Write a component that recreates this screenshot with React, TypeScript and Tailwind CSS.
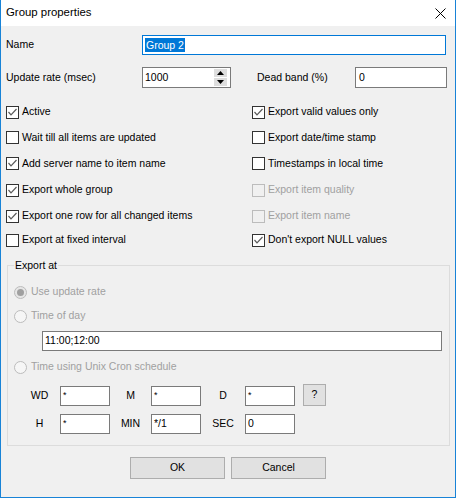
import React from "react";

const font = "font-['Liberation_Sans',Arial,sans-serif]";

function CheckBox({ checked, disabled }: { checked?: boolean; disabled?: boolean }) {
  return (
    <span
      className={`flex h-[13px] w-[13px] shrink-0 items-center justify-center border ${
        disabled ? "border-[#bcbcbc] bg-[#f0f0f0]" : "border-[#333333] bg-white"
      }`}
    >
      {checked && (
        <svg width="11" height="11" viewBox="0 0 11 11">
          <polyline points="1.5,5 4,7.8 9.5,2" fill="none" stroke="#5a5a5a" strokeWidth="1.2" />
        </svg>
      )}
    </span>
  );
}

function Radio({ selected }: { selected?: boolean }) {
  return (
    <span
      className={`flex h-[13px] w-[13px] shrink-0 items-center justify-center rounded-full border border-[#bcbcbc] ${
        selected ? "bg-[#e6e6e6]" : "bg-[#f6f6f6]"
      }`}
    >
      {selected && <span className="h-[7px] w-[7px] rounded-full bg-[#a0a0a0]" />}
    </span>
  );
}

function CheckRow({ label, checked, disabled }: { label: string; checked?: boolean; disabled?: boolean }) {
  return (
    <div className="flex items-center gap-[3px]">
      <CheckBox checked={checked} disabled={disabled} />
      <span className={disabled ? "text-[#a0a0a0]" : "text-black"}>{label}</span>
    </div>
  );
}

function TextBox({ value, className }: { value: string; className: string }) {
  return (
    <div className={`flex items-center border border-[#7a7a7a] bg-white pl-[2px] ${className}`}>
      <span>{value}</span>
    </div>
  );
}

function Spinner() {
  return (
    <div className="mr-[3px] flex flex-col gap-[1px]">
      <div className="flex h-[8px] w-[13px] items-center justify-center bg-[#dedede]">
        <svg width="7" height="4" viewBox="0 0 7 4">
          <polygon points="3.5,0 7,4 0,4" fill="#000" />
        </svg>
      </div>
      <div className="flex h-[8px] w-[13px] items-center justify-center bg-[#dedede]">
        <svg width="7" height="4" viewBox="0 0 7 4">
          <polygon points="0,0 7,0 3.5,4" fill="#000" />
        </svg>
      </div>
    </div>
  );
}

const checks: [string, boolean, boolean][] = [
  ["Active", true, false],
  ["Export valid values only", true, false],
  ["Wait till all items are updated", false, false],
  ["Export date/time stamp", false, false],
  ["Add server name to item name", true, false],
  ["Timestamps in local time", false, false],
  ["Export whole group", true, false],
  ["Export item quality", false, true],
  ["Export one row for all changed items", true, false],
  ["Export item name", false, true],
  ["Export at fixed interval", false, false],
  ["Don't export NULL values", true, false],
];

export default function App() {
  return (
    <div
      className={`${font} flex h-[498px] w-[456px] flex-col border-x border-b border-[#1883d7] bg-[#f0f0f0] text-[10.5px] text-black`}
    >
      <div className="flex h-[26px] shrink-0 items-center justify-between bg-white pl-[5px] pr-[9px]">
        <span className="text-[11.4px]">Group properties</span>
        <svg width="11" height="11" viewBox="0 0 11 11">
          <path d="M0.5 0.5 L10.5 10.5 M10.5 0.5 L0.5 10.5" stroke="#000" strokeWidth="1" />
        </svg>
      </div>

      <div className="pl-[5px] pt-[9px]">
        <div className="flex h-[20px] items-center">
          <span className="w-[136px]">Name</span>
          <div className="flex h-[20px] w-[304px] items-center border border-[#0078d7] bg-white pl-[2px]">
            <span className="bg-[#0078d7] px-[1px] leading-[14px] text-white">Group 2</span>
          </div>
        </div>

        <div className="mt-[12px] flex h-[21px] items-center">
          <span className="w-[136px]">Update rate (msec)</span>
          <div className="flex h-[21px] w-[89px] items-center justify-between border border-[#7a7a7a] bg-white pl-[2px]">
            <span>1000</span>
            <Spinner />
          </div>
          <span className="ml-[26px] w-[98px]">Dead band (%)</span>
          <TextBox value="0" className="h-[21px] w-[92px] pl-[3px]" />
        </div>

        <div className="mt-[11px] grid grid-cols-[246px_1fr] grid-rows-[26px_25px_27px_26px_26px_22px]">
          {checks.map(([label, checked, disabled]) => (
            <CheckRow key={label} label={label} checked={checked} disabled={disabled} />
          ))}
        </div>

        <fieldset className="ml-[1px] mt-[7px] w-[443px] border border-[#dcdcdc] pb-[11px] pl-[6px]">
          <legend className="px-[1px] leading-[14px]">Export at</legend>

          <div className="mt-[12px] flex h-[16px] items-center gap-[4px] text-[#a0a0a0]">
            <Radio selected />
            <span>Use update rate</span>
          </div>
          <div className="mt-[8px] flex h-[16px] items-center gap-[4px] text-[#a0a0a0]">
            <Radio />
            <span>Time of day</span>
          </div>
          <TextBox value="11:00;12:00" className="ml-[28px] mt-[7px] h-[20px] w-[400px]" />
          <div className="mt-[8px] flex h-[16px] items-center gap-[4px] text-[#a0a0a0]">
            <Radio />
            <span>Time using Unix Cron schedule</span>
          </div>

          <div className="ml-[5px] mt-[9px] flex items-end">
            <span className="flex h-[20px] w-[41px] items-center justify-center">WD</span>
            <TextBox value="*" className="h-[20px] w-[50px] text-[9px]" />
            <span className="flex h-[20px] w-[41px] items-center justify-center">M</span>
            <TextBox value="*" className="h-[20px] w-[50px] text-[9px]" />
            <span className="flex h-[20px] w-[44px] items-center justify-center">D</span>
            <TextBox value="*" className="h-[20px] w-[50px] text-[9px]" />
            <div className="ml-[8px] flex h-[22px] w-[23px] items-center justify-center border border-[#adadad] bg-[#e1e1e1]">
              ?
            </div>
          </div>
          <div className="ml-[5px] mt-[8px] flex items-center">
            <span className="flex h-[20px] w-[41px] items-center justify-center">H</span>
            <TextBox value="*" className="h-[20px] w-[50px] text-[9px]" />
            <span className="flex h-[20px] w-[41px] items-center justify-center">MIN</span>
            <TextBox value="*/1" className="h-[20px] w-[50px]" />
            <span className="flex h-[20px] w-[44px] items-center justify-center">SEC</span>
            <TextBox value="0" className="h-[20px] w-[50px]" />
          </div>
        </fieldset>
      </div>

      <div className="mt-[11px] flex justify-center gap-[6px]">
        <button className="flex h-[22px] w-[95px] items-center justify-center border border-[#adadad] bg-[#e1e1e1]">
          OK
        </button>
        <button className="flex h-[22px] w-[95px] items-center justify-center border border-[#adadad] bg-[#e1e1e1]">
          Cancel
        </button>
      </div>
    </div>
  );
}
